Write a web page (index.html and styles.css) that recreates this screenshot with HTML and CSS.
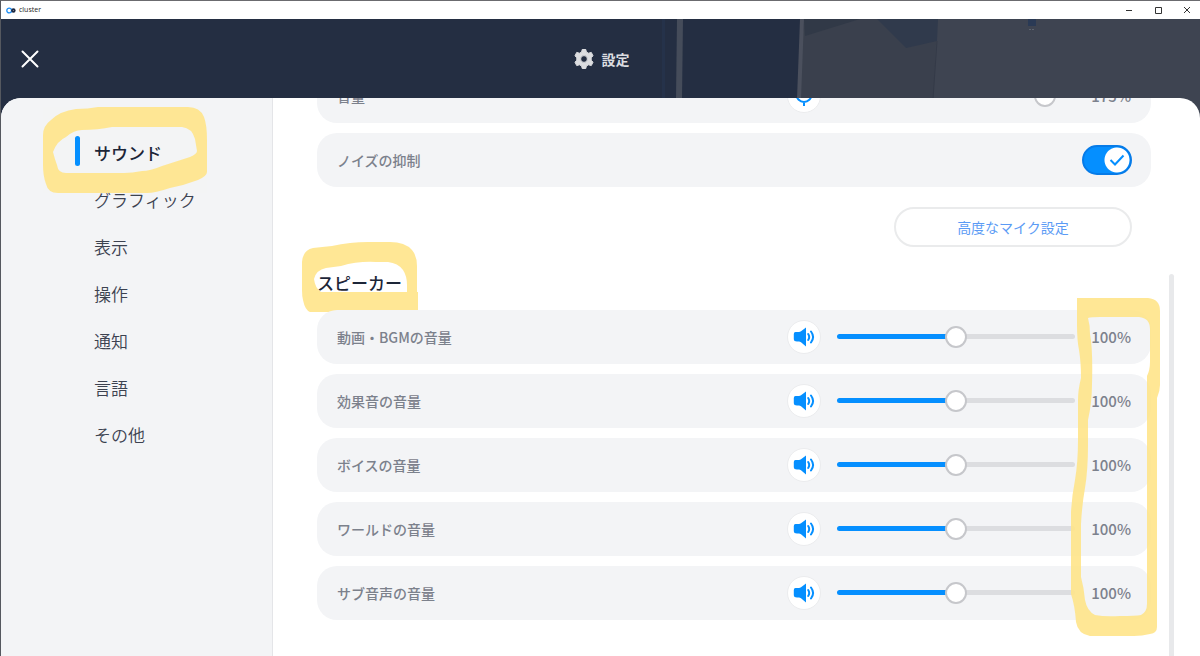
FILE: index.html
```html
<!DOCTYPE html>
<html lang="ja">
<head>
  <meta charset="UTF-8" />
  <meta name="viewport" content="width=device-width, initial-scale=1.0" />
  <title>cluster</title>
  <link rel="stylesheet" href="styles.css">
</head>
<body>
  <!-- shared icons -->
  <svg class="sprite" aria-hidden="true">
    <symbol id="icon-speaker" viewBox="0 0 22 20">
      <path d="M2.500 5H6Q7 5 8 4.200L13 .5V19.500L8 15.200Q7 14.500 6 14.500H4Q.8 14.500 .8 12V7Q.8 5 2.500 5Z" fill="#058fff"/>
      <path d="M15.200 7Q17.200 10 15.200 13M18 4.500Q22.200 10 18 15.500" fill="none" stroke="#058fff" stroke-width="2" stroke-linecap="round"/>
    </symbol>
    <symbol id="icon-mic" viewBox="0 0 22 22">
      <rect x="7.500" y="0" width="7" height="12" rx="3.500" fill="#058fff"/>
      <path d="M3.500 9.500A7.500 7.500 0 0 0 18.500 9.500M11 17V21" fill="none" stroke="#058fff" stroke-width="2"/>
    </symbol>
  </svg>

  <div class="titlebar">
    <svg class="app-icon" viewBox="0 0 10 7">
      <circle cx="3.200" cy="3.500" r="2.400" fill="none" stroke="#1f8ff5" stroke-width="1.300"/>
      <circle cx="7.400" cy="3.500" r="2.200" fill="#1c2740"/>
      <circle cx="7.400" cy="3.500" r=".6" fill="#8d93a0"/>
    </svg>
    <span class="app-name">cluster</span>
    <div class="window-buttons">
      <button type="button" aria-label="最小化"><svg viewBox="0 0 8 8"><path d="M1 4.500H7"/></svg></button>
      <button type="button" aria-label="最大化"><svg viewBox="0 0 8 8"><path d="M1.500 1.500H7.500V7.500H1.500Z"/></svg></button>
      <button type="button" aria-label="閉じる"><svg viewBox="0 0 8 8"><path d="M1 1L7 7M7 1L1 7"/></svg></button>
    </div>
  </div>

  <div class="app">
    <svg class="backdrop" viewBox="0 0 540 110">
      <rect x="2" y="0" width="3" height="80" fill="#25324a"/>
      <path d="M17 0H23L22 80H16Z" fill="#454c5a"/>
      <path d="M144 0H540V110H138V80Z" fill="#3a404d"/>
      <path d="M277 0H540V110H272Z" fill="#3e4451"/>
      <path d="M140 0H144L141 80H137Z" fill="#4b505d"/>
      <path d="M144 0H200L145 17Z" fill="#313947"/>
      <path d="M217 0H278L277 22L246 29Z" fill="#303a4c"/>
      <path d="M277 22L273 80" stroke="#343a48" fill="none"/>
      <path d="M368 0H376V7H368Z" fill="#2a3a55"/>
      <path d="M369 10.500H375" stroke="#5d6470" stroke-dasharray="2 1"/>
    </svg>

    <header class="header">
      <button type="button" class="close" aria-label="閉じる">
        <svg viewBox="0 0 18 18"><path d="M1.500 1.500L16.500 16.500M16.500 1.500L1.500 16.500"/></svg>
      </button>
      <h1>
        <svg class="gear" viewBox="0 0 20 20">
          <path d="M8.200 .5H11.800L12.400 3L14.500 4.200L17.300 3.400L19 6.800L17.200 8.800V11.200L19 13.200L17.300 16.600L14.500 15.800L12.400 17L11.800 19.500H8.200L7.600 17L5.500 15.800L2.700 16.600L1 13.200L2.800 11.200V8.800L1 6.800L2.700 3.400L5.500 4.200L7.600 3ZM10 6.600A3.400 3.400 0 1 0 10 13.400A3.400 3.400 0 1 0 10 6.600Z" fill-rule="evenodd"/>
        </svg>
        設定
      </h1>
    </header>

    <div class="panel">
      <nav class="sidebar">
        <a href="#" class="active">サウンド</a>
        <a href="#">グラフィック</a>
        <a href="#">表示</a>
        <a href="#">操作</a>
        <a href="#">通知</a>
        <a href="#">言語</a>
        <a href="#">その他</a>
        <svg class="marker marker-nav" viewBox="42 106 166 88">
          <path fill-rule="evenodd" d="M43 135Q43 126 51 120Q60 111 76 109Q88 109 98 107H188Q200 107 204 117Q207 125 207 140V172Q207 176 198 180Q185 185 170 188Q155 193 147 193H58Q48 193 46 184Q43 176 43 165ZM53 152Q57 141 66 137Q74 130 82 130Q98 130 112 127H182Q192 128 195 139L197 151Q197 154 190 157L162 166Q150 171 142 171Q132 173 124 173H66Q58 173 57 165Q55 160 53 152Z"/>
        </svg>
      </nav>

      <main class="content">
        <section class="rows mic">
          <div class="row">
            <label for="mic">音量</label>
            <span class="round"><svg class="icon-mic"><use href="#icon-mic"/></svg></span>
            <div class="slider" style="--level: 87.5%"><input type="range" id="mic" min="0" max="200" value="175"></div>
            <output for="mic">175%</output>
          </div>
          <div class="row">
            <label for="noise">ノイズの抑制</label>
            <span class="toggle">
              <input type="checkbox" id="noise" checked>
              <svg class="check" viewBox="0 0 16 12"><path d="M1.500 6L6 10.500L14.500 1.500"/></svg>
            </span>
          </div>
          <button type="button" class="advanced">高度なマイク設定</button>
        </section>

        <section class="speaker">
          <h2>スピーカー
            <svg class="marker marker-heading" viewBox="302 242 116 71">
              <path fill-rule="evenodd" d="M302 262Q303 250 313 248Q322 247 332 246Q350 242 368 242H390Q405 242 412 250Q417 256 417 266V292H418V312H310Q305 310 303 300Q302 296 302 290ZM314 279Q316 270 326 268L341 266Q358 261 376 262H388Q398 263 403 270Q407 276 407 285V292H321Q315 288 314 279Z"/>
            </svg>
          </h2>
          <div class="rows">
            <div class="row">
              <label for="bgm">動画・BGMの音量</label>
              <span class="round"><svg class="icon-speaker"><use href="#icon-speaker"/></svg></span>
              <div class="slider" style="--level: 50%"><input type="range" id="bgm" min="0" max="200" value="100"></div>
              <output for="bgm">100%</output>
            </div>
            <div class="row">
              <label for="effect">効果音の音量</label>
              <span class="round"><svg class="icon-speaker"><use href="#icon-speaker"/></svg></span>
              <div class="slider" style="--level: 50%"><input type="range" id="effect" min="0" max="200" value="100"></div>
              <output for="effect">100%</output>
            </div>
            <div class="row">
              <label for="voice">ボイスの音量</label>
              <span class="round"><svg class="icon-speaker"><use href="#icon-speaker"/></svg></span>
              <div class="slider" style="--level: 50%"><input type="range" id="voice" min="0" max="200" value="100"></div>
              <output for="voice">100%</output>
            </div>
            <div class="row">
              <label for="world">ワールドの音量</label>
              <span class="round"><svg class="icon-speaker"><use href="#icon-speaker"/></svg></span>
              <div class="slider" style="--level: 50%"><input type="range" id="world" min="0" max="200" value="100"></div>
              <output for="world">100%</output>
            </div>
            <div class="row">
              <label for="sub">サブ音声の音量</label>
              <span class="round"><svg class="icon-speaker"><use href="#icon-speaker"/></svg></span>
              <div class="slider" style="--level: 50%"><input type="range" id="sub" min="0" max="200" value="100"></div>
              <output for="sub">100%</output>
            </div>
            <svg class="marker marker-values" viewBox="1070 297 91 340">
              <path fill-rule="evenodd" d="M1077 298H1148Q1160 299 1160 311V385Q1160 391 1157 398V627Q1157 633 1150 634Q1142 636 1134 636H1090Q1078 634 1076 622Q1075 606 1071 594V512Q1072 495 1075 480Q1078 462 1078 440V400Q1078 390 1081 378Q1081 362 1079 350Q1077 340 1077 325ZM1088 318Q1091 317 1100 317H1139Q1150 318 1150 329V362Q1150 370 1147 376V604Q1147 612 1141 615Q1136 616 1120 616Q1105 617 1095 615Q1087 611 1085 600Q1084 588 1081 577V524Q1082 505 1085 488Q1088 470 1088 445V420Q1092 402 1092 384Q1093 350 1090 334Q1090 325 1088 318Z"/>
            </svg>
          </div>
        </section>
        <div class="scrollbar"></div>
      </main>
    </div>
  </div>
</body>
</html>
```
FILE: styles.css
```css
:root {
  --navy: #242e42;
  --text: #1d2638;
  --muted: #7c818c;
  --row: #f3f4f6;
  --blue: #058fff;
  --marker: #ffe58a;
}
* {
  box-sizing: border-box;
}
body {
  margin: 0;
  height: 100vh;
  display: flex;
  flex-direction: column;
  overflow: hidden;
  border-top: 1px solid #6b6b6f;
  border-left: 1px solid #55585f;
  background: #fff;
  color: var(--text);
  font-family: "Noto Sans CJK JP", sans-serif;
  font-size: 14px;
}
button {
  font: inherit;
  cursor: pointer;
}
svg {
  display: block;
}
.sprite {
  position: absolute;
  width: 0;
  height: 0;
}

/* window title bar */
.titlebar {
  display: flex;
  align-items: center;
  flex: none;
  height: 18px;
  padding: 0 4px 0 5px;
}
.app-icon {
  width: 10px;
  height: 7px;
}
.app-name {
  margin-left: 3px;
  font-family: "Open Sans", sans-serif;
  font-size: 7px;
  line-height: 18px;
  color: #222;
}
.window-buttons {
  display: flex;
  gap: 11px;
  margin-left: auto;
}
.window-buttons button {
  width: 18px;
  height: 18px;
  padding: 0 5px;
  border: none;
  background: none;
}
.window-buttons svg {
  width: 8px;
  height: 8px;
  fill: none;
  stroke: #333;
}

/* app */
.app {
  position: relative;
  display: flex;
  flex-direction: column;
  flex: 1;
  min-height: 0;
  background: var(--navy);
}
.backdrop {
  position: absolute;
  top: 0;
  right: 0;
  width: 540px;
  height: 110px;
}
.header {
  position: relative;
  display: flex;
  align-items: center;
  justify-content: center;
  flex: none;
  height: 79px;
  padding-left: 2px;
}
.close {
  position: absolute;
  left: 20px;
  padding: 0;
  border: none;
  background: none;
}
.close svg {
  width: 18px;
  height: 18px;
  fill: none;
  stroke: #fff;
  stroke-width: 2;
  stroke-linecap: round;
}
.header h1 {
  display: flex;
  align-items: center;
  gap: 8px;
  margin: 0;
  font-size: 14px;
  line-height: 20px;
  color: #dcdde0;
}
.gear {
  width: 20px;
  height: 20px;
  fill: #dcdde0;
  stroke: #dcdde0;
  stroke-linejoin: round;
}
.panel {
  position: relative;
  display: flex;
  flex: 1;
  min-height: 0;
  overflow: hidden;
  border-radius: 20px 20px 0 0;
  background: #fff;
}

/* sidebar */
.sidebar {
  position: relative;
  display: flex;
  flex-direction: column;
  flex: none;
  width: 272px;
  padding-top: 31px;
  border-right: 1px solid #e4e5e8;
  background: var(--row);
}
.sidebar a {
  position: relative;
  padding-left: 93px;
  font-size: 17px;
  line-height: 47px;
  font-weight: 350;
  color: #3c4250;
  text-decoration: none;
}
.sidebar a.active {
  font-weight: 500;
  color: var(--text);
}
.sidebar a.active::before {
  content: "";
  position: absolute;
  left: 74px;
  top: 7px;
  width: 5px;
  height: 30px;
  border-radius: 3px;
  background: var(--blue);
}

/* content */
.content {
  position: relative;
  flex: 1;
  min-width: 0;
  padding: 0 49px 0 44px;
}
.rows {
  position: relative;
  display: flex;
  flex-direction: column;
  gap: 10px;
}
.mic {
  margin-top: -29px;
}
.row {
  display: flex;
  align-items: center;
  height: 54px;
  padding: 0 19px 0 20px;
  border-radius: 20px;
  background: var(--row);
}
.row label {
  flex: 1;
  font-weight: 500;
  color: var(--muted);
}
.row output {
  width: 41px;
  margin-left: 16px;
  padding-right: 1px;
  font-size: 15px;
  line-height: 24px;
  font-weight: 500;
  text-align: right;
  color: var(--muted);
}
.round {
  display: flex;
  align-items: center;
  justify-content: center;
  width: 34px;
  height: 34px;
  margin-right: 16px;
  border: 1px solid #ebecee;
  border-radius: 50%;
  background: #fff;
}
.icon-speaker {
  width: 22px;
  height: 20px;
}
.icon-mic {
  width: 22px;
  height: 22px;
}
.slider {
  position: relative;
  width: 238px;
  height: 22px;
}
.slider::before {
  content: "";
  position: absolute;
  left: 0;
  right: 0;
  top: 8px;
  height: 5px;
  border-radius: 3px;
  background: linear-gradient(to right, var(--blue) var(--level), #dcdde0 var(--level));
}
/* the knob's centre reaches both ends of the bar */
.slider input {
  position: relative;
  display: block;
  width: calc(100% + 22px);
  height: 22px;
  margin: 0 -11px;
  background: none;
  -webkit-appearance: none;
  appearance: none;
}
.slider input::-webkit-slider-thumb {
  -webkit-appearance: none;
  width: 22px;
  height: 22px;
  border: 2px solid #c6c7cb;
  border-radius: 50%;
  background: #fff;
}
.toggle {
  position: relative;
}
.toggle input {
  display: block;
  width: 50px;
  height: 30px;
  margin: 0;
  border: 2px solid #067be8;
  border-radius: 15px;
  background: radial-gradient(circle at 33px 13px, #fff 12px, var(--blue) 13px);
  -webkit-appearance: none;
  appearance: none;
}
.check {
  position: absolute;
  right: 7px;
  top: 9px;
  width: 16px;
  height: 12px;
  fill: none;
  stroke: var(--blue);
  stroke-width: 2;
  pointer-events: none;
}
.advanced {
  align-self: flex-end;
  width: 238px;
  height: 40px;
  margin: 10px 19px 0 0;
  border: 2px solid #eaebec;
  border-radius: 20px;
  background: #fff;
  color: #5b9bf5;
}
.speaker h2 {
  position: relative;
  margin: 22px 0 13px;
  font-size: 17px;
  line-height: 28px;
  font-weight: 500;
}
.scrollbar {
  position: absolute;
  top: 176px;
  right: 26px;
  bottom: 0;
  width: 5px;
  border-radius: 3px 3px 0 0;
  background: #e8e9eb;
}

/* highlighter strokes */
.marker {
  position: absolute;
  fill: var(--marker);
  opacity: 0.9;
  pointer-events: none;
}
.marker-nav {
  left: 41px;
  top: 8px;
  width: 166px;
  height: 88px;
}
.marker-heading {
  left: -15px;
  top: -27px;
  width: 116px;
  height: 71px;
}
.marker-values {
  right: -10px;
  top: -13px;
  width: 91px;
  height: 340px;
}
```
